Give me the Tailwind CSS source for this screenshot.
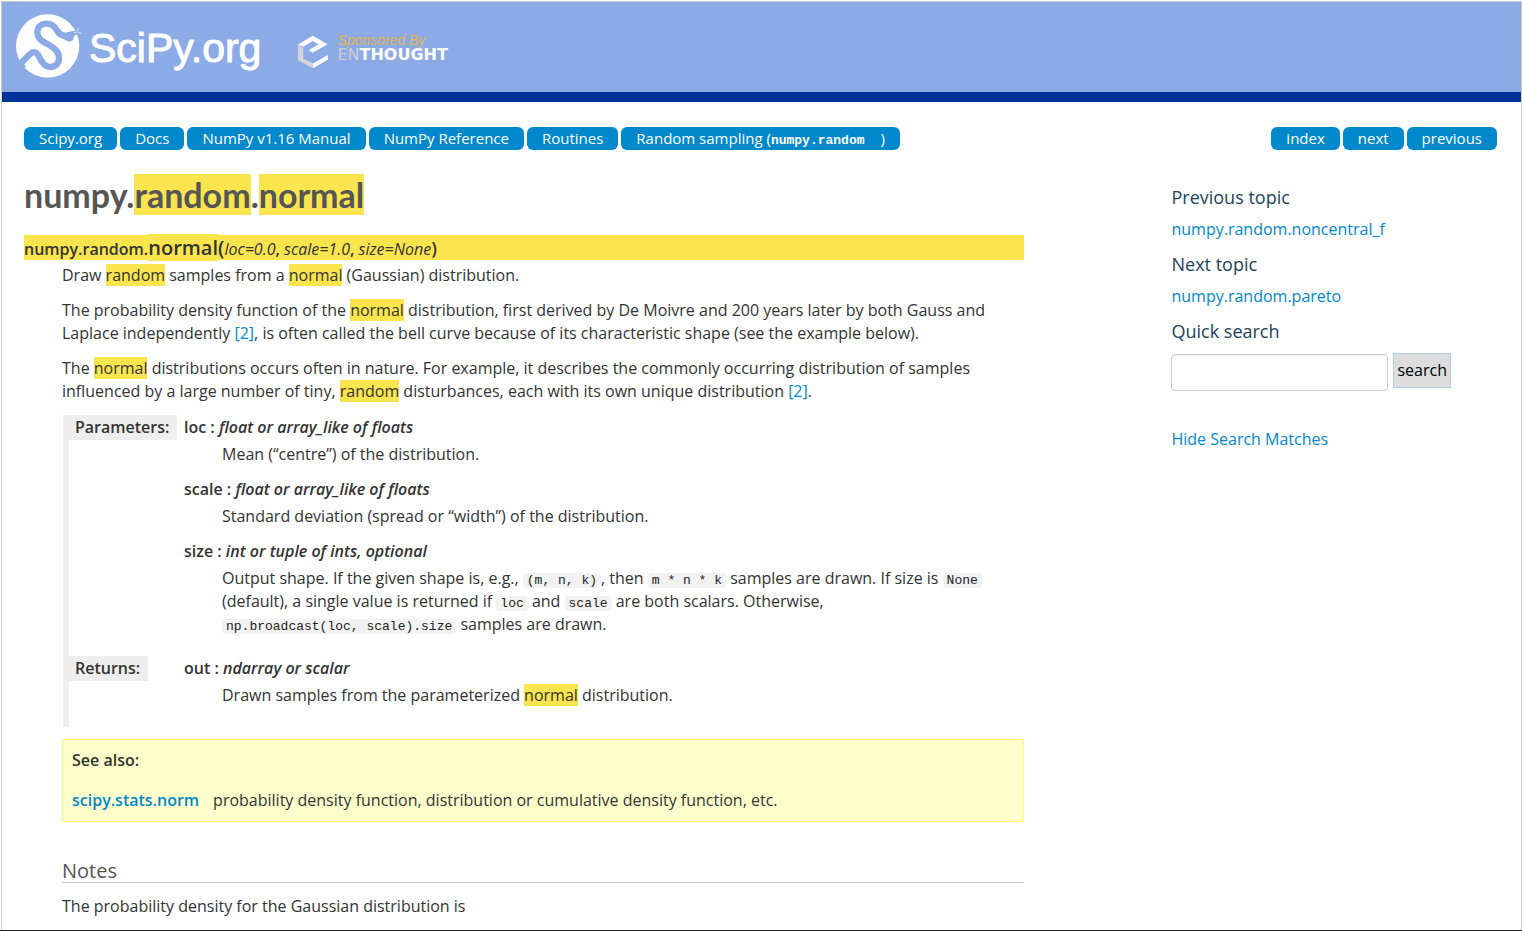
<!DOCTYPE html>
<html lang="en">
<head>
<meta charset="utf-8">
<title>numpy.random.normal — NumPy v1.16 Manual</title>
<script src="https://cdn.jsdelivr.net/npm/@tailwindcss/browser@4"></script>
</head>
<body class="bg-white font-['Open_Sans','Noto_Sans',sans-serif] text-base leading-[23px] text-[#333]">
<div class="flex h-screen flex-col overflow-hidden border-b border-[#28282c] bg-white pt-px pl-px">
<div class="flex-1 overflow-hidden border border-b-0 border-[#ccc]">
  <header class="flex h-[100px] items-start border-b-[10px] border-[#003399] bg-[#8caae6]">
    <a href="#" class="mt-[11px] ml-3 flex items-start" aria-label="SciPy.org">
      <svg class="h-[66px] w-[70px]" viewBox="42 39 210 198" aria-hidden="true">
        <circle cx="143" cy="138" r="95" fill="#fff"/>
        <path d="M58 194 L88 164 Q104 148 115 166 C127 192 137 201 150 201 C167 201 177 190 177 174 C177 155 164 145 146 134 C124 123 112 114 112 96 C112 80 124 71 140 71 C155 71 163 78 170 90 Q178 106 198 108" fill="none" stroke="#8caae6" stroke-width="19"/>
        <path d="M192 104 L202 96 L226 92 L240 97 L222 108 L219 121 L206 125 L190 117Z" fill="#8caae6"/>
        <path d="M222 97 Q234 98 232 92 Q230 88 238 84 M234 96 L245 101" fill="none" stroke="#dfe7fa" stroke-width="3"/>
        <path d="M44 190 L62 182 L78 199 L66 212Z" fill="#8caae6"/>
      </svg>
      <span class="mt-[7px] ml-[5px] font-['Liberation_Sans',sans-serif] text-[41px] leading-[56px] text-white [-webkit-text-stroke:1px_white]">SciPy.org</span>
    </a>
    <a href="#" class="mt-7 ml-9 flex items-start gap-2" aria-label="Sponsored by Enthought">
      <svg class="mt-1 h-[36px] w-8" viewBox="895 105 98 108" aria-hidden="true">
        <path d="M898 136 L914 146 V180 L944 194 V209 L898 184Z" fill="#d4d4d4"/>
        <path d="M898 136 L943 109 L989 135 L943 161 L931 153 L961 135 L943 125 L914 143Z" fill="#fff"/>
        <path d="M914 180 L944 194 L990 168 V182 L944 209 V194Z" fill="#fff"/>
      </svg>
      <span class="flex flex-col">
        <span class="mt-[3px] font-['Liberation_Sans',sans-serif] text-sm leading-[14px] text-[#e2b552] italic">Sponsored By</span>
        <span class="font-['DejaVu_Sans',sans-serif] text-base leading-4 font-bold text-white"><span class="font-normal text-[#ccced2]">EN</span>THOUGHT</span>
      </span>
    </a>
  </header>

  <div class="pr-6 pl-[22px]">
    <nav class="mt-[25px] flex gap-[3px] text-[15px] text-white *:rounded-md *:bg-[#0088cc] *:px-[15px]">
      <a href="#">Scipy.org</a>
      <a href="#">Docs</a>
      <a href="#">NumPy v1.16 Manual</a>
      <a href="#">NumPy Reference</a>
      <a href="#">Routines</a>
      <a href="#">Random sampling (<code class="pr-4 font-['Liberation_Mono',monospace] text-[13px] leading-none font-bold">numpy.random</code>)</a>
      <a href="#" class="ml-auto">index</a>
      <a href="#">next</a>
      <a href="#">previous</a>
    </nav>

    <div class="flex justify-between">
      <main class="w-[67.9%]">
        <h1 class="mt-[25px] font-['Lato','Open_Sans',sans-serif] text-[34px] leading-[40px] font-bold text-[#555]">numpy.<mark class="bg-[#fbe54e] text-inherit">random</mark>.<mark class="bg-[#fbe54e] text-inherit">normal</mark></h1>
        <dl>
          <dt class="mt-5 h-[25px] bg-[#fbe54e] leading-[25px] font-semibold">numpy.random.<mark class="bg-[#fbe54e] text-xl leading-[25px] text-inherit">normal</mark><span class="text-xl leading-[25px]">(</span><em class="font-normal">loc=0.0</em>, <em class="font-normal">scale=1.0</em>, <em class="font-normal">size=None</em><span class="text-lg leading-[25px]">)</span></dt>
          <dd class="mt-1 ml-[38px]">
            <p class="mb-3">Draw <mark class="bg-[#fbe54e] text-inherit">random</mark> samples from a <mark class="bg-[#fbe54e] text-inherit">normal</mark> (Gaussian) distribution.</p>
            <p class="mb-3">The probability density function of the <mark class="bg-[#fbe54e] text-inherit">normal</mark> distribution, first derived by De Moivre and 200 years later by both Gauss and Laplace independently <a href="#" class="text-[#0088cc]">[2]</a>, is often called the bell curve because of its characteristic shape (see the example below).</p>
            <p class="mb-3">The <mark class="bg-[#fbe54e] text-inherit">normal</mark> distributions occurs often in nature. For example, it describes the commonly occurring distribution of samples influenced by a large number of tiny, <mark class="bg-[#fbe54e] text-inherit">random</mark> disturbances, each with its own unique distribution <a href="#" class="text-[#0088cc]">[2]</a>.</p>

            <table class="ml-px w-full border-l-[6px] border-[#eee]">
              <tbody>
                <tr>
                  <th class="w-[115px] p-0 text-left align-top font-semibold"><div class="w-fit bg-[#eee] py-px pr-2 pl-[6px]">Parameters:</div></th>
                  <td class="pt-px pb-2 pl-[3px]">
                    <dl>
                      <dt class="font-semibold">loc : <em>float or array_like of floats</em></dt>
                      <dd class="mt-1 mb-3 ml-[38px]">Mean (“centre”) of the distribution.</dd>
                      <dt class="font-semibold">scale : <em>float or array_like of floats</em></dt>
                      <dd class="mt-1 mb-3 ml-[38px]">Standard deviation (spread or “width”) of the distribution.</dd>
                      <dt class="font-semibold">size : <em>int or tuple of ints, optional</em></dt>
                      <dd class="mt-1 mb-3 ml-[38px] max-w-[770px]">Output shape. If the given shape is, e.g., <code class="rounded bg-[#f2f2f2] px-1 font-['Liberation_Mono',monospace] text-[13px] leading-none text-[#222]">(m, n, k)</code>, then <code class="rounded bg-[#f2f2f2] px-1 font-['Liberation_Mono',monospace] text-[13px] leading-none text-[#222]">m * n * k</code> samples are drawn. If size is <code class="rounded bg-[#f2f2f2] px-1 font-['Liberation_Mono',monospace] text-[13px] leading-none text-[#222]">None</code> (default), a single value is returned if <code class="rounded bg-[#f2f2f2] px-1 font-['Liberation_Mono',monospace] text-[13px] leading-none text-[#222]">loc</code> and <code class="rounded bg-[#f2f2f2] px-1 font-['Liberation_Mono',monospace] text-[13px] leading-none text-[#222]">scale</code> are both scalars. Otherwise, <code class="rounded bg-[#f2f2f2] px-1 font-['Liberation_Mono',monospace] text-[13px] leading-none whitespace-nowrap text-[#222]">np.broadcast(loc, scale).size</code> samples are drawn.</dd>
                    </dl>
                  </td>
                </tr>
                <tr>
                  <th class="p-0 text-left align-top font-semibold"><div class="w-fit bg-[#eee] py-px pr-2 pl-[6px]">Returns:</div></th>
                  <td class="pt-px pb-2 pl-[3px]">
                    <dl>
                      <dt class="font-semibold">out : <em>ndarray or scalar</em></dt>
                      <dd class="mt-1 mb-3 ml-[38px]">Drawn samples from the parameterized <mark class="bg-[#fbe54e] text-inherit">normal</mark> distribution.</dd>
                    </dl>
                  </td>
                </tr>
              </tbody>
            </table>

            <section class="mt-3 border border-[#ffff66] bg-[#ffffcc] px-[9px] pt-[9px] pb-[9px]">
              <p class="mb-[17px] font-semibold">See also:</p>
              <p class="flex gap-[14px]"><a href="#" class="font-semibold text-[#0088cc]">scipy.stats.norm</a><span>probability density function, distribution or cumulative density function, etc.</span></p>
            </section>

            <h2 class="mt-[37px] border-b border-[#c8c8c8] text-xl leading-[23px] text-[#555]">Notes</h2>
            <p class="mt-3">The probability density for the Gaussian distribution is</p>
          </dd>
        </dl>
      </main>

      <aside class="w-[22.1%] pt-6">
        <h3 class="mt-3 mb-[9px] text-lg leading-[23px] text-[#20435c]">Previous topic</h3>
        <p><a href="#" class="text-[#0088cc]">numpy.random.noncentral_f</a></p>
        <h3 class="mt-3 mb-[9px] text-lg leading-[23px] text-[#20435c]">Next topic</h3>
        <p><a href="#" class="text-[#0088cc]">numpy.random.pareto</a></p>
        <h3 class="mt-3 mb-[10px] text-lg leading-[23px] text-[#20435c]">Quick search</h3>
        <form class="flex items-start gap-[5px]">
          <input type="text" aria-label="Quick search" class="mt-px h-[37px] w-[217px] rounded border border-[#ccc] px-1.5 shadow-[inset_0_1px_1px_rgba(0,0,0,0.075)]">
          <button type="button" class="h-[35px] border border-[#accfe2] bg-[#ddd] px-[3px] text-black">search</button>
        </form>
        <p class="mt-[37px]"><a href="#" class="text-[#0088cc]">Hide Search Matches</a></p>
      </aside>
    </div>
  </div>
</div>
</div>
</body>
</html>
